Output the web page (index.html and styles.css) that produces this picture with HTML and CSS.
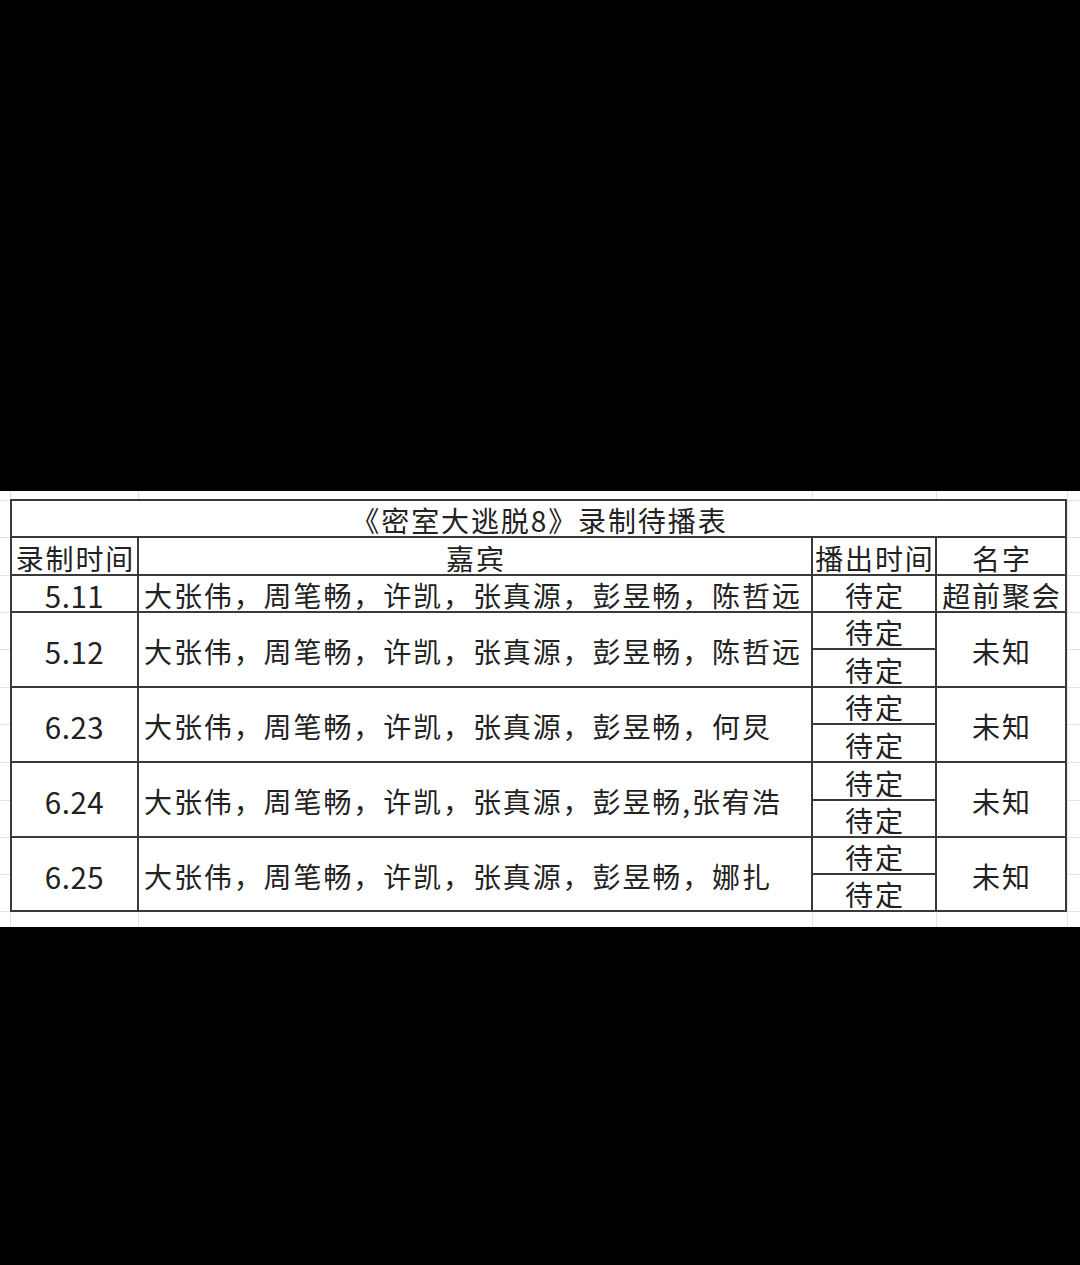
FILE: index.html
```html
<!DOCTYPE html>
<html lang="zh-CN">
<head>
<meta charset="utf-8">
<title>《密室大逃脱8》录制待播表</title>
<link rel="stylesheet" href="styles.css">
</head>
<body>
<div class="sheet">
  <table class="grid">
    <colgroup><col class="c1"><col class="c2"><col class="c3"><col class="c4"></colgroup>
    <tr class="h37"><td colspan="4">《密室大逃脱8》录制待播表</td></tr>
    <tr class="h38"><td>录制时间</td><td>嘉宾</td><td>播出时间</td><td>名字</td></tr>
    <tr class="h37"><td class="date">5.11</td><td class="names">大张伟，周笔畅，许凯，张真源，彭昱畅，陈哲远</td><td>待定</td><td>超前聚会</td></tr>
    <tr class="h37"><td rowspan="2" class="date">5.12</td><td rowspan="2" class="names">大张伟，周笔畅，许凯，张真源，彭昱畅，陈哲远</td><td>待定</td><td rowspan="2">未知</td></tr>
    <tr class="h38"><td>待定</td></tr>
    <tr class="h37"><td rowspan="2" class="date">6.23</td><td rowspan="2" class="names">大张伟，周笔畅，许凯，张真源，彭昱畅，何炅</td><td>待定</td><td rowspan="2">未知</td></tr>
    <tr class="h38"><td>待定</td></tr>
    <tr class="h38"><td rowspan="2" class="date">6.24</td><td rowspan="2" class="names">大张伟，周笔畅，许凯，张真源，彭昱畅,张宥浩</td><td>待定</td><td rowspan="2">未知</td></tr>
    <tr class="h37"><td>待定</td></tr>
    <tr class="h37"><td rowspan="2" class="date">6.25</td><td rowspan="2" class="names">大张伟，周笔畅，许凯，张真源，彭昱畅，娜扎</td><td>待定</td><td rowspan="2">未知</td></tr>
    <tr class="h37"><td>待定</td></tr>
  </table>
</div>
</body>
</html>
```
FILE: styles.css
```css
html, body {
  margin: 0;
  padding: 0;
  background: #000;
}
body {
  height: 1265px;
  overflow: hidden;
  font-family: "Noto Sans CJK SC", "Noto Sans", sans-serif;
}
.sheet {
  margin-top: 491px;
  height: 436px;
  box-sizing: border-box;
  padding: 8px 0 0 10px;
  background-color: #fff;
  background-repeat: no-repeat;
  background-image:
    linear-gradient(#e3e3e3, #e3e3e3), linear-gradient(#e3e3e3, #e3e3e3),
    linear-gradient(#e3e3e3, #e3e3e3), linear-gradient(#e3e3e3, #e3e3e3),
    linear-gradient(#e3e3e3, #e3e3e3),
    linear-gradient(#e3e3e3, #e3e3e3), linear-gradient(#e3e3e3, #e3e3e3),
    linear-gradient(#e3e3e3, #e3e3e3), linear-gradient(#e3e3e3, #e3e3e3),
    linear-gradient(#e3e3e3, #e3e3e3), linear-gradient(#e3e3e3, #e3e3e3),
    linear-gradient(#e3e3e3, #e3e3e3), linear-gradient(#e3e3e3, #e3e3e3),
    linear-gradient(#e3e3e3, #e3e3e3), linear-gradient(#e3e3e3, #e3e3e3),
    linear-gradient(#e3e3e3, #e3e3e3), linear-gradient(#e3e3e3, #e3e3e3);
  background-size:
    1px 100%, 1px 100%, 1px 100%, 1px 100%, 1px 100%,
    100% 1px, 100% 1px, 100% 1px, 100% 1px, 100% 1px, 100% 1px,
    100% 1px, 100% 1px, 100% 1px, 100% 1px, 100% 1px, 100% 1px;
  background-position:
    10px 0, 138px 0, 812px 0, 936px 0, 1067px 0,
    0 9px, 0 46px, 0 84px, 0 121px, 0 158px, 0 196px,
    0 233px, 0 271px, 0 309px, 0 346px, 0 383px, 0 420px;
}
.grid {
  border-collapse: collapse;
  table-layout: fixed;
  width: 1057px;
  background: #fff;
  color: #222;
  font-size: 28px;
  line-height: 28px;
  letter-spacing: 1.9px;
}
.c1 { width: 127px; }
.c2 { width: 674px; }
.c3 { width: 124px; }
.c4 { width: 130px; }
.grid td {
  border: 2px solid #3a3a3a;
  padding: 3px 0 0 1.9px;
  text-align: center;
  vertical-align: middle;
  white-space: nowrap;
}
.grid td.names {
  text-align: left;
  padding-left: 5px;
}
.grid td.date {
  font-size: 29.5px;
  letter-spacing: 0.5px;
  padding-left: 0;
}
.h37 { height: 37px; }
.h38 { height: 38px; }
```
